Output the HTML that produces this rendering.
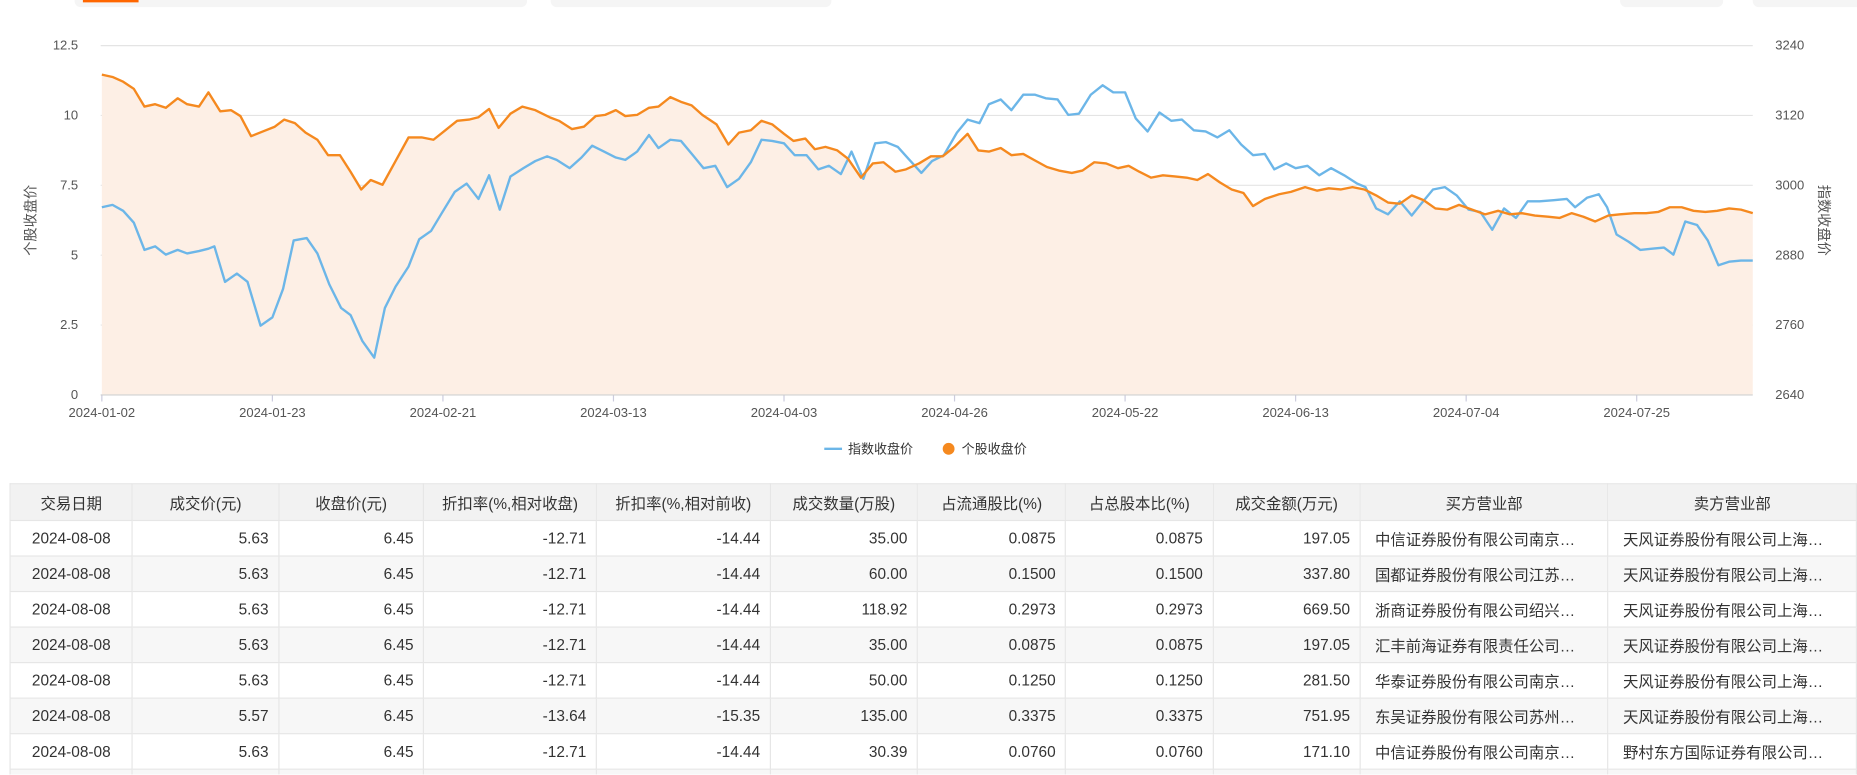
<!DOCTYPE html>
<html><head><meta charset="utf-8">
<style>
html,body{margin:0;padding:0}
body{width:1857px;height:775px;overflow:hidden;background:#fff;font-family:"Liberation Sans","Noto Sans CJK SC",sans-serif}
#w{position:absolute;left:0;top:0;width:1568px;height:654px;transform:scale(1.1843);transform-origin:0 0;overflow:hidden}
.box{position:absolute;top:0;height:6px;background:#f5f5f5;border-radius:0 0 5px 5px}
table{position:absolute;left:8px;top:408px;border-collapse:collapse;font-size:13px;color:#333;table-layout:fixed}
td,th{height:29px;border:1px solid #e6e6e6;padding:0 8px;white-space:nowrap;overflow:hidden;text-overflow:ellipsis}
th{background:#f2f2f2;font-weight:normal;height:30px;text-align:center}
td{text-align:right}
td.c{text-align:center}
td.l{text-align:left;padding-left:12px}
tr:nth-child(odd) td{background:#f7f7f7}
</style></head><body><div id="w">
<div class="box" style="left:63px;width:382px"></div>
<div style="position:absolute;left:70px;top:0;width:47px;height:2px;background:#f60"></div>
<div class="box" style="left:465px;width:237px"></div>
<div class="box" style="left:1368px;width:87px"></div>
<div class="box" style="left:1480px;width:100px"></div>
<svg width="1568" height="400" style="position:absolute;left:0;top:0" font-family="Liberation Sans" font-size="11" fill="#555">
<g stroke="#e4e4e4" stroke-width="1">
<line x1="85" x2="1480" y1="38.5" y2="38.5"/><line x1="85" x2="1480" y1="97.5" y2="97.5"/><line x1="85" x2="1480" y1="156.5" y2="156.5"/><line x1="85" x2="1480" y1="215.5" y2="215.5"/><line x1="85" x2="1480" y1="274.5" y2="274.5"/>
</g>
<line x1="85" x2="1480" y1="333.5" y2="333.5" stroke="#ccc"/>
<g stroke="#ccd" ><line x1="86" x2="86" y1="334" y2="339"/><line x1="230" x2="230" y1="334" y2="339"/><line x1="374" x2="374" y1="334" y2="339"/><line x1="518" x2="518" y1="334" y2="339"/><line x1="662" x2="662" y1="334" y2="339"/><line x1="806" x2="806" y1="334" y2="339"/><line x1="950" x2="950" y1="334" y2="339"/><line x1="1094" x2="1094" y1="334" y2="339"/><line x1="1238" x2="1238" y1="334" y2="339"/><line x1="1382" x2="1382" y1="334" y2="339"/></g>
<g text-anchor="end"><text x="66" y="42">12.5</text><text x="66" y="101">10</text><text x="66" y="160">7.5</text><text x="66" y="219">5</text><text x="66" y="278">2.5</text><text x="66" y="337">0</text></g>
<g><text x="1499" y="42">3240</text><text x="1499" y="101">3120</text><text x="1499" y="160">3000</text><text x="1499" y="219">2880</text><text x="1499" y="278">2760</text><text x="1499" y="337">2640</text></g>
<g text-anchor="middle"><text x="86" y="352">2024-01-02</text><text x="230" y="352">2024-01-23</text><text x="374" y="352">2024-02-21</text><text x="518" y="352">2024-03-13</text><text x="662" y="352">2024-04-03</text><text x="806" y="352">2024-04-26</text><text x="950" y="352">2024-05-22</text><text x="1094" y="352">2024-06-13</text><text x="1238" y="352">2024-07-04</text><text x="1382" y="352">2024-07-25</text></g>
<text x="0" y="0" font-size="12" text-anchor="middle" transform="translate(30,186) rotate(-90)" font-family="Liberation Sans,Noto Sans CJK SC">个股收盘价</text>
<text x="0" y="0" font-size="12" text-anchor="middle" transform="translate(1536,186) rotate(90)" font-family="Liberation Sans,Noto Sans CJK SC">指数收盘价</text>
<polygon fill="#fdefe5" points="86,333 86,63 95,65 104,69 113,75 122,90 131,88 140,91 150,83 158,88 168,90 176,78 186,94 195,93 203,98 212,115 222,111 232,107 240,101 249,104 258,112 268,118 277,131 287,131 296,145 305,160 313,152 323,156 334,136 345,116 356,116 366,118 376,110 386,102 396,101 404,99 413,92 421,108 431,96 441,90 452,93 464,99 472,102 483,109 493,107 503,98 511,97 520,93 528,98 538,97 548,91 556,90 566,82 575,86 584,89 593,97 605,105 615,122 624,112 634,110 643,102 652,105 662,113 670,119 680,117 688,126 697,124 707,127 716,134 727,150 737,138 746,137 756,145 765,143 776,138 786,132 796,132 806,124 817,113 826,127 835,128 845,125 854,131 864,130 873,135 884,141 894,144 905,146 914,144 924,137 934,138 944,142 953,140 962,145 972,150 982,148 992,149 1002,150 1011,152 1020,147 1030,154 1040,160 1050,163 1058,174 1068,168 1080,164 1090,162 1102,158 1112,161 1122,159 1132,160 1142,158 1152,160 1162,165 1172,171 1182,172 1192,165 1202,169 1212,176 1222,177 1232,173 1243,177 1254,181 1265,178 1275,181 1285,180 1296,182 1307,183 1317,184 1327,180 1337,183 1347,187 1358,182 1368,181 1380,180 1390,180 1400,179 1410,175 1420,175 1430,178 1440,179 1450,178 1460,176 1470,177 1480,180 1480,333"/>
<polyline fill="none" stroke="#6cb6e8" stroke-width="2" stroke-linejoin="round" points="86,175 95,173 104,178 113,188 122,211 131,208 140,215 150,211 158,214 168,212 176,210 181,208 190,238 200,231 209,238 220,275 230,268 239,244 248,203 259,201 268,214 278,240 288,260 296,266 306,288 316,302 325,260 334,242 345,225 354,202 364,195 373,180 384,162 394,155 404,168 413,148 422,177 431,149 442,142 452,136 462,132 470,135 481,142 491,133 500,123 510,128 520,133 528,135 538,128 548,114 556,125 566,118 575,119 585,131 594,142 604,140 614,158 624,151 634,137 643,118 652,119 662,121 671,131 681,131 691,143 700,140 710,147 719,128 729,151 739,121 748,120 758,124 767,134 778,146 787,136 797,131 808,112 817,101 827,104 835,88 845,84 854,93 864,80 874,80 883,83 893,84 902,97 911,96 921,80 931,72 940,78 950,78 959,100 969,111 979,95 989,102 998,101 1008,110 1018,111 1028,116 1038,110 1048,122 1058,131 1068,130 1076,143 1086,138 1094,142 1104,140 1114,148 1124,142 1135,148 1146,155 1153,158 1162,176 1172,181 1182,170 1192,182 1200,172 1210,160 1220,158 1230,165 1240,177 1250,179 1260,194 1270,176 1280,184 1290,170 1300,170 1312,169 1323,168 1330,175 1340,167 1350,164 1357,175 1365,198 1375,204 1385,211 1395,210 1405,209 1413,215 1423,187 1433,190 1442,203 1451,224 1460,221 1470,220 1480,220"/>
<polyline fill="none" stroke="#f5891f" stroke-width="2" stroke-linejoin="round" points="86,63 95,65 104,69 113,75 122,90 131,88 140,91 150,83 158,88 168,90 176,78 186,94 195,93 203,98 212,115 222,111 232,107 240,101 249,104 258,112 268,118 277,131 287,131 296,145 305,160 313,152 323,156 334,136 345,116 356,116 366,118 376,110 386,102 396,101 404,99 413,92 421,108 431,96 441,90 452,93 464,99 472,102 483,109 493,107 503,98 511,97 520,93 528,98 538,97 548,91 556,90 566,82 575,86 584,89 593,97 605,105 615,122 624,112 634,110 643,102 652,105 662,113 670,119 680,117 688,126 697,124 707,127 716,134 727,150 737,138 746,137 756,145 765,143 776,138 786,132 796,132 806,124 817,113 826,127 835,128 845,125 854,131 864,130 873,135 884,141 894,144 905,146 914,144 924,137 934,138 944,142 953,140 962,145 972,150 982,148 992,149 1002,150 1011,152 1020,147 1030,154 1040,160 1050,163 1058,174 1068,168 1080,164 1090,162 1102,158 1112,161 1122,159 1132,160 1142,158 1152,160 1162,165 1172,171 1182,172 1192,165 1202,169 1212,176 1222,177 1232,173 1243,177 1254,181 1265,178 1275,181 1285,180 1296,182 1307,183 1317,184 1327,180 1337,183 1347,187 1358,182 1368,181 1380,180 1390,180 1400,179 1410,175 1420,175 1430,178 1440,179 1450,178 1460,176 1470,177 1480,180"/>
<line x1="696" x2="711" y1="379" y2="379" stroke="#6cb6e8" stroke-width="2"/>
<text x="716" y="383" font-size="11" fill="#333" font-family="Liberation Sans,Noto Sans CJK SC">指数收盘价</text>
<circle cx="801" cy="379" r="5" fill="#f5891f"/>
<text x="812" y="383" font-size="11" fill="#333" font-family="Liberation Sans,Noto Sans CJK SC">个股收盘价</text>
</svg>
<table>
<colgroup><col style="width:105px"><col style="width:127px"><col style="width:126px"><col style="width:147px"><col style="width:148px"><col style="width:126px"><col style="width:127px"><col style="width:126px"><col style="width:126px"><col style="width:211px"><col style="width:211px"></colgroup>
<tr><th>交易日期</th><th>成交价(元)</th><th>收盘价(元)</th><th>折扣率(%,相对收盘)</th><th>折扣率(%,相对前收)</th><th>成交数量(万股)</th><th>占流通股比(%)</th><th>占总股本比(%)</th><th>成交金额(万元)</th><th>买方营业部</th><th>卖方营业部</th></tr>
<tr><td class="c">2024-08-08</td><td>5.63</td><td>6.45</td><td>-12.71</td><td>-14.44</td><td>35.00</td><td>0.0875</td><td>0.0875</td><td>197.05</td><td class="l">中信证券股份有限公司南京…</td><td class="l">天风证券股份有限公司上海…</td></tr>
<tr><td class="c">2024-08-08</td><td>5.63</td><td>6.45</td><td>-12.71</td><td>-14.44</td><td>60.00</td><td>0.1500</td><td>0.1500</td><td>337.80</td><td class="l">国都证券股份有限公司江苏…</td><td class="l">天风证券股份有限公司上海…</td></tr>
<tr><td class="c">2024-08-08</td><td>5.63</td><td>6.45</td><td>-12.71</td><td>-14.44</td><td>118.92</td><td>0.2973</td><td>0.2973</td><td>669.50</td><td class="l">浙商证券股份有限公司绍兴…</td><td class="l">天风证券股份有限公司上海…</td></tr>
<tr><td class="c">2024-08-08</td><td>5.63</td><td>6.45</td><td>-12.71</td><td>-14.44</td><td>35.00</td><td>0.0875</td><td>0.0875</td><td>197.05</td><td class="l">汇丰前海证券有限责任公司…</td><td class="l">天风证券股份有限公司上海…</td></tr>
<tr><td class="c">2024-08-08</td><td>5.63</td><td>6.45</td><td>-12.71</td><td>-14.44</td><td>50.00</td><td>0.1250</td><td>0.1250</td><td>281.50</td><td class="l">华泰证券股份有限公司南京…</td><td class="l">天风证券股份有限公司上海…</td></tr>
<tr><td class="c">2024-08-08</td><td>5.57</td><td>6.45</td><td>-13.64</td><td>-15.35</td><td>135.00</td><td>0.3375</td><td>0.3375</td><td>751.95</td><td class="l">东吴证券股份有限公司苏州…</td><td class="l">天风证券股份有限公司上海…</td></tr>
<tr><td class="c">2024-08-08</td><td>5.63</td><td>6.45</td><td>-12.71</td><td>-14.44</td><td>30.39</td><td>0.0760</td><td>0.0760</td><td>171.10</td><td class="l">中信证券股份有限公司南京…</td><td class="l">野村东方国际证券有限公司…</td></tr>
<tr><td class="c">&nbsp;</td><td></td><td></td><td></td><td></td><td></td><td></td><td></td><td></td><td></td><td></td></tr>
</table>
</div></body></html>
